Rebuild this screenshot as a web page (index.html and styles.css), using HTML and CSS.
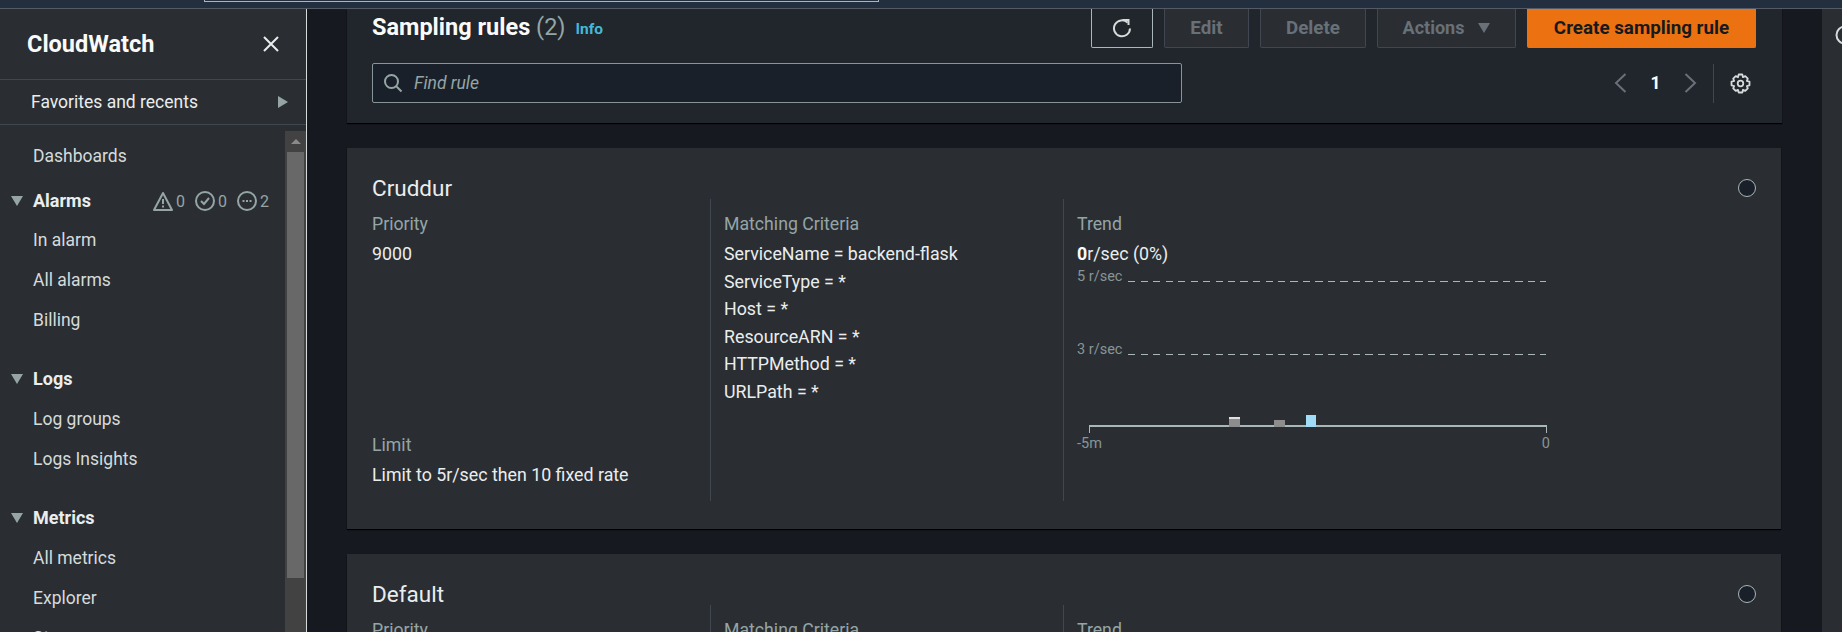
FILE: index.html
```html
<!DOCTYPE html>
<html lang="en">
<head>
<meta charset="utf-8">
<title>CloudWatch Sampling rules</title>
<link rel="stylesheet" href="styles.css">
</head>
<body>
<div class="topbar"><div class="urlbar"></div></div>
<div class="app">
  <nav class="side">
    <div class="side-head"><span class="brand">CloudWatch</span>
      <svg class="close" width="16" height="16" viewBox="0 0 16 16"><path d="M1 1 L15 15 M15 1 L1 15" stroke="#e9ebed" stroke-width="2" fill="none"/></svg>
    </div>
    <div class="fav"><span>Favorites and recents</span><svg width="10" height="12" viewBox="0 0 10 12"><path d="M0 0 L10 6 L0 12Z" fill="#95a5a6"/></svg></div>
    <div class="side-body">
      <div class="menu">
        <a class="item first">Dashboards</a>
        <div class="group first-group"><svg class="tri" width="12" height="10" viewBox="0 0 12 10"><path d="M0 0 H12 L6 10Z" fill="#95a5a6"/></svg><span>Alarms</span>
          <div class="badges">
            <svg width="20" height="20" viewBox="0 0 20 20"><path d="M10 2 L19 19 H1Z" fill="none" stroke="#95a5a6" stroke-width="2" stroke-linejoin="round"/><path d="M10 8 V13 M10 14.5 V16.5" stroke="#95a5a6" stroke-width="2"/></svg><b>0</b>
            <svg width="20" height="20" viewBox="0 0 20 20"><circle cx="10" cy="10" r="9" fill="none" stroke="#95a5a6" stroke-width="2"/><path d="M6 10 L9 13 L14 7" fill="none" stroke="#95a5a6" stroke-width="2"/></svg><b>0</b>
            <svg width="20" height="20" viewBox="0 0 20 20"><circle cx="10" cy="10" r="9" fill="none" stroke="#95a5a6" stroke-width="2"/><path d="M5.5 10 H7.5 M9 10 H11 M12.5 10 H14.5" stroke="#95a5a6" stroke-width="2"/></svg><b>2</b>
          </div>
        </div>
        <a class="item after-first">In alarm</a>
        <a class="item">All alarms</a>
        <a class="item">Billing</a>
        <div class="group"><svg class="tri" width="12" height="10" viewBox="0 0 12 10"><path d="M0 0 H12 L6 10Z" fill="#95a5a6"/></svg><span>Logs</span></div>
        <a class="item">Log groups</a>
        <a class="item">Logs Insights</a>
        <div class="group"><svg class="tri" width="12" height="10" viewBox="0 0 12 10"><path d="M0 0 H12 L6 10Z" fill="#95a5a6"/></svg><span>Metrics</span></div>
        <a class="item">All metrics</a>
        <a class="item">Explorer</a>
        <a class="item">Streams</a>
      </div>
      <div class="scroll"><div class="scroll-up"></div><div class="thumb"></div></div>
    </div>
  </nav>
  <main class="main">
    <section class="panel-head">
      <div class="title-row">
        <h1>Sampling rules <span class="count">(2)</span></h1><a class="info">Info</a>
        <div class="actions">
          <button class="btn refresh"><svg width="20" height="20" viewBox="0 0 20 20"><path d="M15.6 4.6 A8 8 0 1 0 18 10.5" fill="none" stroke="#d5dbdb" stroke-width="2"/><path d="M10.5 2 H16.5 V1 M16.5 1 V7" fill="none" stroke="#d5dbdb" stroke-width="2"/></svg></button>
          <button class="btn off edit">Edit</button>
          <button class="btn off del">Delete</button>
          <button class="btn off wide">Actions<i class="caret"></i></button>
          <button class="btn primary">Create sampling rule</button>
        </div>
      </div>
      <div class="find-row">
        <div class="find"><svg width="20" height="20" viewBox="0 0 20 20"><circle cx="8.5" cy="8.5" r="6.5" fill="none" stroke="#95a5a6" stroke-width="2"/><path d="M13 13 L18.5 18.5" stroke="#95a5a6" stroke-width="2"/></svg><span>Find rule</span></div>
        <div class="pager">
          <svg width="13" height="20" viewBox="0 0 13 20"><path d="M11.5 1 L2 10 L11.5 19" fill="none" stroke="#687078" stroke-width="2"/></svg>
          <span>1</span>
          <svg width="13" height="20" viewBox="0 0 13 20"><path d="M1.5 1 L11 10 L1.5 19" fill="none" stroke="#687078" stroke-width="2"/></svg>
          <i class="vr"></i>
          <svg width="21" height="21" viewBox="0 0 21 21"><path d="M8.7 1.5 H12.3 L13 4.2 L15.3 3.2 L17.8 5.7 L16.8 8 L19.5 8.7 V12.3 L16.8 13 L17.8 15.3 L15.3 17.8 L13 16.8 L12.3 19.5 H8.7 L8 16.8 L5.7 17.8 L3.2 15.3 L4.2 13 L1.5 12.3 V8.7 L4.2 8 L3.2 5.7 L5.7 3.2 L8 4.2Z" fill="none" stroke="#d5dbdb" stroke-width="1.8" stroke-linejoin="round"/><circle cx="10.5" cy="10.5" r="2.8" fill="none" stroke="#d5dbdb" stroke-width="1.8"/></svg>
        </div>
      </div>
    </section>
    <section class="card">
      <div class="card-head"><h2>Cruddur</h2><i class="radio"></i></div>
      <div class="cols">
        <div class="col col-a">
          <div><div class="lab">Priority</div><div class="val">9000</div></div>
          <div><div class="lab">Limit</div><div class="val">Limit to 5r/sec then 10 fixed rate</div></div>
        </div>
        <div class="col col-b">
          <div class="lab">Matching Criteria</div>
          <div class="val">ServiceName = backend-flask</div>
          <div class="val">ServiceType = *</div>
          <div class="val">Host = *</div>
          <div class="val">ResourceARN = *</div>
          <div class="val">HTTPMethod = *</div>
          <div class="val">URLPath = *</div>
        </div>
        <div class="col col-c">
          <div class="lab">Trend</div>
          <div class="val"><b>0</b>r/sec (0%)</div>
          <div class="chart">
            <span class="tick-label t5">5 r/sec</span><i class="dash d5"></i>
            <span class="tick-label t3">3 r/sec</span><i class="dash d3"></i>
            <div class="axis">
              <i class="bar b1"></i><i class="bar b2"></i><i class="bar b3"></i>
            </div>
            <div class="axis-labels"><span>-5m</span><span>0</span></div>
          </div>
        </div>
      </div>
    </section>
    <section class="card">
      <div class="card-head"><h2>Default</h2><i class="radio"></i></div>
      <div class="cols">
        <div class="col col-a"><div><div class="lab">Priority</div></div></div>
        <div class="col col-b"><div class="lab">Matching Criteria</div></div>
        <div class="col col-c"><div class="lab">Trend</div></div>
      </div>
    </section>
  </main>
  <aside class="rail"><svg width="20" height="20" viewBox="0 0 20 20"><circle cx="10" cy="10" r="8.5" fill="none" stroke="#d5dbdb" stroke-width="2"/></svg></aside>
</div>
</body>
</html>
```
FILE: styles.css
```css
* { box-sizing: border-box; }
html, body { margin: 0; height: 632px; overflow: hidden; background: #16191f; }
body { font-family: Roboto, "Noto Sans", sans-serif; font-size: 17.5px; color: #d5dbdb; }
.topbar { height: 9px; background: #232f3e; border-bottom: 1px solid #545b64; padding-left: 204px; }
.urlbar { width: 675px; height: 2px; background: #232f3e; border: 1px solid #aab7b8; border-top: 0; }
.app { display: flex; height: 623px; }
.side { width: 307px; flex: none; background: #2a2e33; border-right: 1px solid #d5dbdb; display: flex; flex-direction: column; overflow: hidden; }
.side-head { height: 71px; flex: none; display: flex; align-items: center; justify-content: space-between; padding: 0 27px 0 27px; border-bottom: 1px solid #414750; }
.brand { font-size: 23.5px; font-weight: 700; color: #fafafa; margin-bottom: 1px; }
.fav { height: 45px; flex: none; display: flex; align-items: center; justify-content: space-between; padding: 0 18px 0 31px; border-bottom: 1px solid #414750; color: #eaeded; }
.side-body { flex: 1; display: flex; min-height: 0; padding-top: 6px; }
.menu { flex: 1; min-width: 0; overflow: hidden; padding: 5px 0 0 33px; }
.item { display: flex; align-items: center; height: 40px; color: #d5dbdb; }
.after-first { margin-top: -1px; }
.group { position: relative; display: flex; align-items: center; height: 40px; margin-top: 19px; font-weight: 700; font-size: 18px; color: #eaeded; }
.group > span { margin-top: -1px; }
.first-group { margin-top: 5px; }
.tri { position: absolute; left: -22px; top: 15px; }
.badges { margin-left: auto; margin-right: 16px; display: flex; align-items: center; color: #95a5a6; }
.badges svg { margin-left: 10px; }
.badges b { font-weight: 400; font-size: 16px; margin-left: 3px; }
.scroll { width: 21px; flex: none; background: #424242; }
.scroll-up { height: 21px; position: relative; }
.scroll-up::before { content: ""; position: absolute; left: 6px; top: 8px; border-left: 5px solid transparent; border-right: 5px solid transparent; border-bottom: 5px solid #8a8a8a; }
.thumb { width: 17px; margin-left: 2px; height: 426px; background: #686868; }
.main { flex: none; width: 1514px; padding-left: 40px; display: flex; flex-direction: column; }
.panel-head { width: 1435px; height: 114px; flex: none; background: #21252c; box-shadow: 0 1px 1px #000; padding: 0 26px 0 25px; }
.title-row { display: flex; align-items: flex-start; height: 39px; }
h1 { margin: 4px 0 0; font-size: 23.5px; line-height: 28px; font-weight: 700; color: #fafafa; }
.count { font-weight: 400; color: #95a5a6; }
.info { margin: 11px 0 0 10px; font-size: 15.5px; line-height: 18px; font-weight: 700; color: #44b9d6; }
.actions { margin-left: auto; display: flex; gap: 11px; }
.btn { height: 39px; padding: 0 0 1px; background: #2a2e33; border: 1px solid #414750; border-top: 0; border-radius: 0 0 2px 2px; font: 700 18.8px Roboto, sans-serif; display: flex; align-items: center; justify-content: center; white-space: nowrap; }
.refresh { width: 62px; border-color: #aab7b8; background: transparent; }
.off { color: #687078; }
.edit { width: 85px; }
.del { width: 106px; }
.wide { width: 139px; gap: 14px; font-size: 18px; }
.caret { width: 0; height: 0; border-left: 6.5px solid transparent; border-right: 6.5px solid transparent; border-top: 10px solid #687078; }
.primary { width: 229px; background: #ec7211; border-color: #ec7211; color: #16191f; }
.find-row { display: flex; justify-content: space-between; margin-top: 15px; }
.find { width: 810px; height: 40px; background: #1a2029; border: 1px solid #879596; border-radius: 2px; display: flex; align-items: center; padding-left: 10px; gap: 11px; color: #95a5a6; font-style: italic; }
.pager { display: flex; align-items: center; height: 40px; font-weight: 700; color: #fafafa; margin-right: 5px; }
.pager span { width: 57px; text-align: center; }
.vr { width: 1px; height: 39px; background: #414750; margin: 0 16px; }
.card { width: 1434px; height: 381px; flex: none; background: #2a2e33; box-shadow: 0 1px 1px #000; margin-top: 25px; padding: 0 25px; }
.card-head { height: 51px; display: flex; align-items: center; justify-content: space-between; padding-top: 28px; }
h2 { margin: 0; font-size: 22.5px; line-height: 28px; font-weight: 400; color: #eaeded; }
.radio { width: 18px; height: 18px; border: 1px solid #aab7b8; border-radius: 50%; background: #1a2029; }
.cols { display: flex; height: 302px; }
.col { height: 100%; padding-top: 12px; }
.col-a { width: 339px; display: flex; flex-direction: column; justify-content: space-between; padding-bottom: 12.5px; border-right: 1px solid #414750; }
.col-b { width: 353px; padding-left: 13px; border-right: 1px solid #414750; }
.col-c { flex: 1; padding-left: 13px; }
.lab { color: #95a5a6; font-size: 17.7px; line-height: 27.5px; margin-bottom: 1.5px; }
.val { color: #eaeded; font-size: 17.8px; line-height: 27.5px; }
.val b { color: #fafafa; }
.chart { position: relative; width: 480px; height: 190px; margin-top: 1px; font-size: 14.5px; line-height: 16px; color: #879596; }
.tick-label { position: absolute; left: 0; }
.t5 { top: 0; }
.t3 { top: 73px; }
.dash { position: absolute; left: 51px; width: 418px; height: 1px; background: repeating-linear-gradient(90deg, #aab7b8 0 7px, transparent 7px 12.5px); }
.d5 { top: 12px; }
.d3 { top: 85px; }
.axis { position: absolute; left: 12px; width: 458px; top: 156px; height: 8px; border: solid #aab7b8; border-width: 2px 1px 0; }
.bar { position: absolute; bottom: 100%; width: 11px; }
.b1 { left: 139px; height: 10px; background: #8d8d8d; border-top: 2px solid #e0e0e0; }
.b2 { left: 184px; height: 7px; background: #8d8d8d; }
.b3 { left: 216px; width: 10px; height: 12px; background: #a0dcf5; }
.axis-labels { position: absolute; left: 0; width: 473px; top: 167px; display: flex; justify-content: space-between; }
.rail { flex: 1; background: #2a2e33; border-left: 1px solid #16191f; padding: 16px 0 0 13px; overflow: hidden; }
```
